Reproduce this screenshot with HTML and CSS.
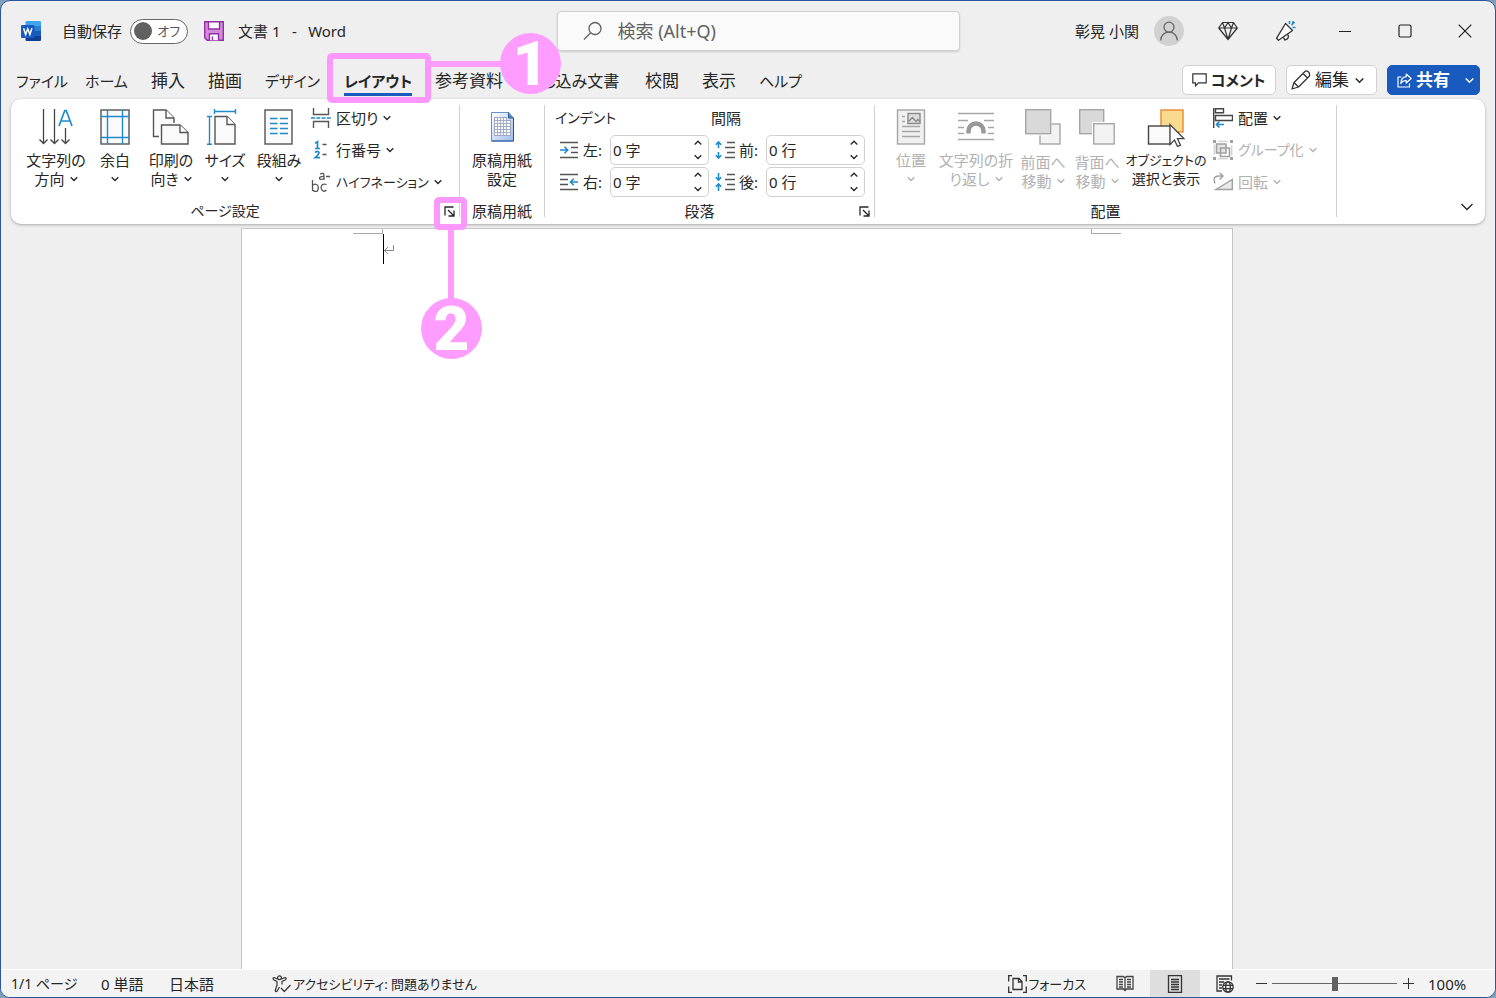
FILE: index.html
```html
<!DOCTYPE html>
<html lang="ja">
<head>
    <meta charset="UTF-8">
    <meta name="viewport" content="width=device-width, initial-scale=1.0">
    <title>文書 1 - Word</title>
    <link rel="stylesheet" href="styles.css">
</head>
<body>

<!-- Shared chevron -->
<svg class="defs" width="0" height="0">
    <symbol id="chev" viewBox="0 0 8 6"><path d="M.7 1.2 4 4.5 7.3 1.2" fill="none" stroke="currentColor" stroke-width="1.3"/></symbol>
    <symbol id="chevUp" viewBox="0 0 8 6"><path d="M.7 4.5 4 1.2 7.3 4.5" fill="none" stroke="currentColor" stroke-width="1.3"/></symbol>
    <symbol id="launch" viewBox="0 0 11 11"><path d="M1 9.500V1h8.500M4 4l5.500 5.500M10 4.500V10H4.500" fill="none" stroke="currentColor" stroke-width="1.300"/></symbol>
</svg>

<div class="window">

    <!-- Title bar -->
    <header class="titlebar">
        <div class="title-left">
            <svg class="word-logo" width="20" height="20" viewBox="0 0 20 20">
                <path d="M4.500 1.200Q4.500 0 5.700 0H18.800Q20 0 20 1.200V5H4.500z" fill="#41a5ee"/>
                <path d="M4.500 5H20v5H4.500z" fill="#2b7cd3"/>
                <path d="M4.500 10H20v5H4.500z" fill="#185abd"/>
                <path d="M4.500 15H20v3.800Q20 20 18.800 20H5.700Q4.500 20 4.500 18.800z" fill="#103f91"/>
                <rect y="4" width="13.500" height="13" rx="1.200" fill="#185abd"/>
                <path d="M2.600 7.300 4.600 13.500 6.750 7.800 8.900 13.500 10.900 7.300" fill="none" stroke="#fff" stroke-width="1.500"/>
            </svg>
            <span class="autosave-label" id="autosave">自動保存</span>
            <button class="toggle" role="switch" aria-checked="false" aria-labelledby="autosave"><span class="knob"></span>オフ</button>
            <button class="icon-btn save" aria-label="上書き保存">
                <svg width="20" height="20" viewBox="0 0 20 20" stroke="#922fa5" stroke-width="1.400">
                    <path d="M.7.7h18.600v18.600H3.200L.7 16.800z" fill="#d58bdc"/>
                    <path d="M4.500.7h11v7.300h-11zM5.500 19.300v-6.500h9v6.500" fill="#fff"/>
                    <path d="M8.500 19v-3.500" fill="none"/>
                </svg>
            </button>
            <span class="doc-title">文書 1&ensp;&nbsp;-&ensp;&nbsp;Word</span>
        </div>
        <label class="search">
            <svg width="20" height="20" viewBox="0 0 20 20" fill="none" stroke="#616161" stroke-width="1.300"><circle cx="12" cy="7.500" r="6"/><path d="M7.700 11.800 1 18.500"/></svg>
            <input type="text" placeholder="検索 (Alt+Q)" aria-label="検索">
        </label>
        <div class="title-right">
            <span class="user">彰晃 小関</span>
            <span class="avatar">
                <svg width="20" height="20" viewBox="0 0 20 20" fill="none" stroke="#666" stroke-width="1.300"><circle cx="10" cy="6.200" r="5"/><path d="M1.700 19.500c0-5 3.500-8.300 8.300-8.300s8.300 3.300 8.300 8.300"/></svg>
            </span>
            <button class="icon-btn cmd" aria-label="プレミアム">
                <svg width="20" height="20" viewBox="0 0 20 20" fill="none" stroke="#333" stroke-width="1.200" stroke-linejoin="round"><path d="M4.500 1.500h11L19.300 7 10 18.500.7 7zM.7 7h18.600M4.500 1.500 6.500 7 10 18.500 13.500 7l2-5.500M6.500 7 10 1.500 13.500 7"/></svg>
            </button>
            <button class="icon-btn cmd" aria-label="近日公開の機能">
                <svg width="22" height="22" viewBox="0 0 22 22" fill="none" stroke="#333" stroke-width="1.300" stroke-linejoin="round"><path d="M10.500 3.500 17.500 10.500 3.500 20.300 1.500 18.300z" fill="#fff"/><path d="M8.500 17.500l1.300 2.500q3.500-.5 3.700-4l-1-1.700"/><path d="M14.500 4V1M16.500 5.300 19.500 2M17.500 7.500h3M17.300 3.500l1-2.500" stroke="#1e8bcd" stroke-width="1.500"/></svg>
            </button>
            <button class="icon-btn sys" aria-label="最小化"><svg width="14" height="14" viewBox="0 0 14 14" stroke="#222"><path d="M1 7.500h12"/></svg></button>
            <button class="icon-btn sys" aria-label="最大化"><svg width="14" height="14" viewBox="0 0 14 14" fill="none" stroke="#222" stroke-width="1.200"><rect x="1" y="1" width="12" height="12" rx="1.500"/></svg></button>
            <button class="icon-btn sys" aria-label="閉じる"><svg width="14" height="14" viewBox="0 0 14 14" stroke="#222" stroke-width="1.200"><path d="M.7.700 13.300 13.300M13.300.700.700 13.300"/></svg></button>
        </div>
    </header>

    <!-- Ribbon tabs -->
    <nav class="tabs">
        <button class="tab kana">ファイル</button>
        <button class="tab kana">ホーム</button>
        <button class="tab">挿入</button>
        <button class="tab">描画</button>
        <button class="tab kana">デザイン</button>
        <button class="tab kana active">レイアウト</button>
        <button class="tab">参考資料</button>
        <button class="tab mixed">差し込み文書</button>
        <button class="tab">校閲</button>
        <button class="tab">表示</button>
        <button class="tab kana">ヘルプ</button>
        <div class="tab-actions">
            <button class="pill comment">
                <svg width="15" height="14" viewBox="0 0 15 14" fill="none" stroke="#333" stroke-width="1.200"><path d="M.8.800h13.400v9H6.500L3.500 12.800V9.800H.8z"/></svg>
                コメント
            </button>
            <button class="pill edit">
                <svg width="20" height="20" viewBox="0 0 20 20" fill="none" stroke="#333" stroke-width="1.300" stroke-linejoin="round"><path d="M1 19 3 12.500 14 1.500q1.500-1.300 3.300.2T18.500 6L7.500 17zM12 3.500 16.500 8M3 12.500 7.500 17"/></svg>
                編集
                <svg class="chev" width="9" height="7"><use href="#chev"/></svg>
            </button>
            <button class="pill share">
                <svg width="15" height="15" viewBox="0 0 15 15" fill="none" stroke="#fff" stroke-width="1.200" stroke-linejoin="round"><path d="M4.500 4H1v10h11.500v-3.500"/><path d="M9.200 1 14.200 5.500 9.200 10V7.500Q5.500 7.300 3.800 10.500 4 4.300 9.200 3.700z"/></svg>
                共有
                <svg class="chev" width="9" height="7"><use href="#chev"/></svg>
            </button>
        </div>
    </nav>

    <!-- Ribbon -->
    <section class="ribbon">
        <div class="group g-page">
            <div class="group-body">
                <button class="big w60">
                    <svg width="36" height="36" viewBox="0 0 36 36" fill="none" stroke="#444" stroke-width="1.300"><path d="M5.500 0v34M1.500 30.500l4 4 4-4M16.500 0v34M12.500 30.500l4 4 4-4M27.500 19v15M23.500 30.500l4 4 4-4"/><path d="M21 17 26.800 1.500h1.400L34 17M23 12h9" stroke="#1e8bcd" stroke-width="1.700"/></svg>
                    <span>文字列の</span><span>方向 <svg class="chev" width="8" height="6"><use href="#chev"/></svg></span>
                </button>
                <button class="big w58">
                    <svg width="36" height="36" viewBox="0 0 36 36" fill="none"><rect x="4" y="1" width="28" height="34" fill="#fafafa" stroke="#555" stroke-width="1.400"/><path d="M10.500 1v34M25.500 1v34M4 7.500h28M4 28.500h28" stroke="#1e8bcd" stroke-width="1.400"/></svg>
                    <span>余白</span><span><svg class="chev" width="8" height="6"><use href="#chev"/></svg></span>
                </button>
                <button class="big w54">
                    <svg width="38" height="36" viewBox="0 0 38 36" fill="#fafafa" stroke="#555" stroke-width="1.400"><path d="M7 27.500H1.500V1H14l8 8v5"/><path d="M14 1v8h8" fill="#fff"/><path d="M9.500 16H28l8 7.500V35H9.500z"/><path d="M28 16v7.500h8" fill="#fff"/></svg>
                    <span>印刷の</span><span>向き <svg class="chev" width="8" height="6"><use href="#chev"/></svg></span>
                </button>
                <button class="big w54">
                    <svg width="36" height="36" viewBox="5 0 36 36" fill="#fafafa" stroke="#555" stroke-width="1.400"><path d="M13 7.500h12l8 8V35H13z"/><path d="M25 7.500v8h8" fill="#fff"/><path d="M12.500 2.500h21M12.500 0v5M33.500 0v5M7.500 7.500v28M5 7.500h5M5 35.300h5" stroke="#1e8bcd" fill="none"/></svg>
                    <span>サイズ</span><span><svg class="chev" width="8" height="6"><use href="#chev"/></svg></span>
                </button>
                <button class="big w54">
                    <svg width="36" height="36" viewBox="0 0 36 36"><rect x="4" y="1" width="27" height="34" fill="#fafafa" stroke="#555" stroke-width="1.400"/><path d="M9 9.500h7.500M9 14.500h7.500M9 19.500h7.500M9 24.500h7.500M19 9.500h8M19 14.500h8M19 19.500h8M19 24.500h8" stroke="#1e8bcd" stroke-width="1.500"/></svg>
                    <span>段組み</span><span><svg class="chev" width="8" height="6"><use href="#chev"/></svg></span>
                </button>
                <div class="smalls">
                    <button class="small">
                        <svg width="20" height="20" viewBox="0 0 20 20" fill="none" stroke="#555" stroke-width="1.400"><path d="M2.500 0v6.500h15V0M2.500 20v-6.500h15V20"/><path d="M0 10h20" stroke="#1e8bcd" stroke-dasharray="4 1.300"/></svg>
                        区切り <svg class="chev" width="8" height="6"><use href="#chev"/></svg>
                    </button>
                    <button class="small">
                        <svg width="20" height="20" viewBox="0 0 20 20" fill="none" stroke="#1e8bcd" stroke-width="1.700"><path d="M4 3.200 6.500 1.800V8.500M4 8.500h5M4 12.500q3-2.200 4 0 0 1.800-3.800 5.200H9"/><path d="M11.500 4.500h4M11.500 14.500h4" stroke="#555" stroke-width="1.400"/></svg>
                        行番号 <svg class="chev" width="8" height="6"><use href="#chev"/></svg>
                    </button>
                    <button class="small kana">
                        <svg width="20" height="20" viewBox="0 0 20 20" fill="none" stroke="#555" stroke-width="1.300"><path d="M9 2q4-1.800 4 1.500V8M13 4.500Q8.500 4.200 8.500 6.300T13 6.500M15 4.500h4M1.500 8v11M1.500 13.500q1.500-2 4-1t1.500 5-5.500.5M15.500 12.500q-4-1.300-5 1.500t1 4.500 4-.500"/></svg>
                        ハイフネーション <svg class="chev" width="8" height="6"><use href="#chev"/></svg>
                    </button>
                </div>
            </div>
            <div class="caption mixed"><span>ページ設定</span><button class="launcher" aria-label="ページ設定の詳細"><svg width="11" height="11"><use href="#launch"/></svg></button></div>
        </div>

        <div class="group g-genko">
            <div class="group-body center">
                <button class="big w78">
                    <svg width="36" height="36" viewBox="0 0 36 36">
                        <defs><linearGradient id="sheet" x1="0" y1="0" x2="1" y2="1"><stop offset="0" stop-color="#fff"/><stop offset="1" stop-color="#9dbdec"/></linearGradient></defs>
                        <path d="M7.500 3.500h17l5 5.500v23h-22z" fill="url(#sheet)" stroke="#6a8fcb"/>
                        <path d="M24.500 3.500V9h5" fill="#5e87cb" stroke="#29529b"/><path d="M29.500 9v23h-22" fill="none" stroke="#29529b"/>
                        <path d="M10.500 8.500h12v3h4v15h-16z" fill="#fff" stroke="#9aa5bd"/>
                        <path d="M10.500 11.500h12M10.500 14.500h16M10.500 17.500h16M10.500 20.500h16M10.500 23.500h16M13.500 8v19M16.500 8v19M19.500 8v19M22.500 8v19" fill="none" stroke="#a3adc4"/>
                    </svg>
                    <span>原稿用紙</span><span>設定</span>
                </button>
            </div>
            <div class="caption"><span>原稿用紙</span></div>
        </div>

        <div class="group g-para">
            <div class="group-body fields">
                <div class="field-col">
                    <h2 class="mixed">インデント</h2>
                    <div class="field">
                        <svg width="20" height="20" viewBox="0 0 20 20" fill="none" stroke="#555" stroke-width="1.400"><path d="M1 2.500h18M12 7.500h7M12 12.500h7M1 17.500h18"/><path d="M1 10h7.500M5.500 6.800 8.700 10l-3.200 3.200" stroke="#1e8bcd" stroke-width="1.600"/></svg>
                        <label for="indL">左:</label>
                        <div class="spin"><input id="indL" type="text" value="0 字"><button aria-label="増やす"><svg width="8" height="6"><use href="#chevUp"/></svg></button><button aria-label="減らす"><svg width="8" height="6"><use href="#chev"/></svg></button></div>
                    </div>
                    <div class="field">
                        <svg width="20" height="20" viewBox="0 0 20 20" fill="none" stroke="#555" stroke-width="1.400"><path d="M1 2.500h18M1 7.500h8M1 12.500h8M1 17.500h18"/><path d="M11.500 10H19M14.700 6.800 11.500 10l3.200 3.200" stroke="#1e8bcd" stroke-width="1.600"/></svg>
                        <label for="indR">右:</label>
                        <div class="spin"><input id="indR" type="text" value="0 字"><button aria-label="増やす"><svg width="8" height="6"><use href="#chevUp"/></svg></button><button aria-label="減らす"><svg width="8" height="6"><use href="#chev"/></svg></button></div>
                    </div>
                </div>
                <div class="field-col">
                    <h2>間隔</h2>
                    <div class="field">
                        <svg width="20" height="20" viewBox="0 0 20 20" fill="none" stroke="#555" stroke-width="1.400"><path d="M12 2.500h8M10 7.500h10M12 12.500h8M10 17.500h10"/><path d="M3.500 8V2M.8 4.700l2.700-2.700 2.700 2.700M3.500 12v6M.8 15.300 3.500 18l2.700-2.700" stroke="#1e8bcd" stroke-width="1.600"/></svg>
                        <label for="spB">前:</label>
                        <div class="spin"><input id="spB" type="text" value="0 行"><button aria-label="増やす"><svg width="8" height="6"><use href="#chevUp"/></svg></button><button aria-label="減らす"><svg width="8" height="6"><use href="#chev"/></svg></button></div>
                    </div>
                    <div class="field">
                        <svg width="20" height="20" viewBox="0 0 20 20" fill="none" stroke="#555" stroke-width="1.400"><path d="M12 2.500h8M10 7.500h10M12 12.500h8M10 17.500h10"/><path d="M3.500 1v7M.8 5.300 3.500 8l2.700-2.700M3.500 19v-7M.8 14.700 3.500 12l2.700 2.700" stroke="#1e8bcd" stroke-width="1.600"/></svg>
                        <label for="spA">後:</label>
                        <div class="spin"><input id="spA" type="text" value="0 行"><button aria-label="増やす"><svg width="8" height="6"><use href="#chevUp"/></svg></button><button aria-label="減らす"><svg width="8" height="6"><use href="#chev"/></svg></button></div>
                    </div>
                </div>
            </div>
            <div class="caption"><span>段落</span><button class="launcher" aria-label="段落の詳細"><svg width="11" height="11"><use href="#launch"/></svg></button></div>
        </div>

        <div class="group g-arrange">
            <div class="group-body">
                <button class="big w50" disabled>
                    <svg width="36" height="36" viewBox="0 0 36 36" fill="none" stroke="#a6a6a6" stroke-width="1.400"><rect x="4.500" y="1" width="27" height="34" fill="#f0f0f0"/><rect x="15" y="4.500" width="12" height="10" stroke="#888" fill="#ddd"/><path d="m15.500 12.500 4-4 3.500 4 2-2 2 2" stroke="#888"/><path d="M9 7.500h3M9 12.500h3M9 17.500h18M9 22.500h18M9 27.500h18"/></svg>
                    <span>位置</span><span><svg class="chev" width="8" height="6"><use href="#chev"/></svg></span>
                </button>
                <button class="big w80" disabled>
                    <svg width="36" height="36" viewBox="0 0 36 36" fill="none" stroke="#a6a6a6" stroke-width="1.400"><path d="M0 4.500h36M0 11.500h10M26 11.500h10M0 18.500h6M30 18.500h6M0 24.500h6M30 24.500h6M0 30.500h36"/><path d="M10.500 24.500v-2.500a7.500 7.500 0 0 1 15 0v2.500" stroke="#999" stroke-width="4.500"/></svg>
                    <span>文字列の折</span><span>り返し <svg class="chev" width="8" height="6"><use href="#chev"/></svg></span>
                </button>
                <button class="big w54 low" disabled>
                    <svg width="36" height="36" viewBox="0 0 36 36" stroke="#a6a6a6" stroke-width="1.400"><rect x="15" y="15" width="20" height="20" fill="#f3f3f3"/><path d="M13 13h13.500v13.500H13z" fill="#fff" stroke="none"/><rect x=".7" y=".7" width="25" height="24" fill="#d9d9d9"/></svg>
                    <span>前面へ</span><span>移動 <svg class="chev" width="8" height="6"><use href="#chev"/></svg></span>
                </button>
                <button class="big w54 low" disabled>
                    <svg width="36" height="36" viewBox="0 0 36 36" stroke="#a6a6a6" stroke-width="1.400"><rect x=".7" y=".7" width="24" height="24" fill="#d9d9d9"/><path d="M13 13h23v23H13z" fill="#fff" stroke="none"/><rect x="14.700" y="14.700" width="20.500" height="20.300" fill="#f3f3f3"/></svg>
                    <span>背面へ</span><span>移動 <svg class="chev" width="8" height="6"><use href="#chev"/></svg></span>
                </button>
                <button class="big w84">
                    <svg width="38" height="38" viewBox="0 0 38 38" class="tall"><rect x="14" y="1" width="22" height="22" fill="#f8db8f" stroke="#e8892b" stroke-width="1.400"/><rect x="1.500" y="17" width="22" height="18" fill="#fafafa" stroke="#444" stroke-width="1.400"/><path d="M23 15.500v20l4.500-4.500 3 6.500 3-1.300-3-6.500H37z" fill="#fff" stroke="#444" stroke-width="1.300"/></svg>
                    <span class="kana">オブジェクトの</span><span class="mixed">選択と表示</span>
                </button>
                <div class="smalls">
                    <button class="small">
                        <svg width="20" height="20" viewBox="0 0 20 20" fill="none" stroke="#444" stroke-width="1.400"><path d="M.7 0v20M2.500.700h8v4h-8zM2.500 7.500h17v5h-17z"/><path d="M3.500 16.500H11M6.500 13.500l-3 3 3 3" stroke="#1e8bcd" stroke-width="1.600"/></svg>
                        配置 <svg class="chev" width="8" height="6"><use href="#chev"/></svg>
                    </button>
                    <button class="small mixed" disabled>
                        <svg width="20" height="20" viewBox="0 0 20 20" fill="#e4e4e4" stroke="#a0a0a0" stroke-width="1.600"><path d="M3.500 4h9.500v9H3.500z"/><path d="M7.500 8h9v8.500h-9z" fill="none"/><path d="M0 0h3v3H0zM17 0h3v3h-3zM0 17h3v3H0zM17 17h3v3h-3z" fill="#a0a0a0" stroke="none"/><path d="M5 1.200h10M5 18.800h10M1.200 5v10M18.800 5v10" stroke="#c4c4c4" stroke-width="1"/></svg>
                        グループ化 <svg class="chev" width="8" height="6"><use href="#chev"/></svg>
                    </button>
                    <button class="small" disabled>
                        <svg width="20" height="20" viewBox="0 0 20 20" fill="none" stroke="#a0a0a0" stroke-width="1.400"><path d="M3 17.500h16.300V7.500z" fill="#eaeaea"/><path d="M2 11.500q-3-7.500 4-7.500h3.500M6.500.700 10 4 6.500 7.500"/></svg>
                        回転 <svg class="chev" width="8" height="6"><use href="#chev"/></svg>
                    </button>
                </div>
            </div>
            <div class="caption"><span>配置</span></div>
        </div>

        <button class="icon-btn collapse" aria-label="リボンの表示オプション"><svg width="12" height="8" viewBox="0 0 12 8" fill="none" stroke="#222" stroke-width="1.300"><path d="m.5 1 5.500 5.500L11.500 1"/></svg></button>
    </section>

    <!-- Document -->
    <main class="workspace">
        <article class="paper">
            <div class="marks"><span class="mark left"></span><span class="mark right"></span></div>
            <div class="line">
                <span class="caret"></span>
                <svg width="11" height="11" viewBox="0 0 11 11" fill="none" stroke="#888"><path d="M9.500 1v5.500H.5M4 3 .5 6.500 4 10"/></svg>
            </div>
        </article>
    </main>

    <!-- Status bar -->
    <footer class="status">
        <span class="st-page mixed">1/1 ページ</span>
        <span class="st-words">0 単語</span>
        <span class="st-lang">日本語</span>
        <span class="st-access kana">
            <svg width="20" height="18" viewBox="0 0 20 18" fill="none" stroke="#333" stroke-width="1.200" stroke-linejoin="round"><circle cx="7.500" cy="2.700" r="1.900"/><path d="M5.500 4 2 2.500Q.3 3.200 1.500 4.700L5 6.500V10l-1.800 5.500q.5 2 2 .5L7.500 12M9.500 4l3.700-1.500q1.700.7.500 2.200L10 6.500V9.500"/><path d="m9 13 3.300 3.500L18.500 10"/></svg>
            アクセシビリティ: 問題ありません
        </span>
        <div class="st-right">
            <button class="focus kana">
                <svg width="19" height="18" viewBox="0 0 19 18" fill="none" stroke="#333" stroke-width="1.300"><path d="M4 .700H.700V6.500M15 .700h3.300V6.500M4 17.300H.700V11.500M15 17.300h3.300V11.500M5 3.500h6l3 3v8H5zM10.500 3.500V7H14"/></svg>
                フォーカス
            </button>
            <button class="view" aria-label="閲覧モード"><svg width="18" height="17" viewBox="0 0 18 17" fill="none" stroke="#444" stroke-width="1.300"><path d="M1 1.500h6.500L9 3l1.500-1.500H17v12.500h-6.500L9 15.500 7.500 14H1zM9 3v13M3 4.500h4M3 7h4M3 9.500h4M3 12h4M11 4.500h4M11 7h4M11 9.500h4M11 12h4"/></svg></button>
            <button class="view on" aria-label="印刷レイアウト"><svg width="16" height="18" viewBox="0 0 16 18" fill="none" stroke="#333" stroke-width="1.300"><path d="M1.500.700h13v16.600h-13zM4 4.500h8M4 7h8M4 9.500h8M4 12h8M4 14.500h8"/></svg></button>
            <button class="view" aria-label="Web レイアウト"><svg width="18" height="18" viewBox="0 0 18 18" fill="none" stroke="#333" stroke-width="1.300"><path d="M6 16H1V1h14.500v4.500M3 4h10.500M3 7h5M3 10h3M3 13h3"/><circle cx="12" cy="12" r="5.200"/><ellipse cx="12" cy="12" rx="2.300" ry="5.200"/><path d="M7 10.300h10M7 13.700h10"/></svg></button>
            <button class="zoom-step" aria-label="縮小"><svg width="11" height="11" stroke="#333"><path d="M0 5.500h11"/></svg></button>
            <input class="zoom" type="range" min="0" max="100" value="50" aria-label="ズーム">
            <button class="zoom-step" aria-label="拡大"><svg width="11" height="11" stroke="#333"><path d="M0 5.500h11M5.500 0v11"/></svg></button>
            <span class="percent">100%</span>
        </div>
    </footer>

    <!-- Step callouts, drawn over everything -->
    <div class="frame frame1"></div>
    <div class="rule rule1"></div>
    <div class="badge badge1">1</div>
    <div class="frame frame2"></div>
    <div class="rule rule2"></div>
    <div class="badge badge2">2</div>
</div>

</body>
</html>
```
FILE: styles.css
```css
* {
    box-sizing: border-box;
}
body {
    margin: 0;
    background: #7f9fbd;
    color: #262626;
    font-family: "Noto Sans", "Noto Sans CJK JP", sans-serif;
    font-size: 15px;
    line-height: 20px;
    font-feature-settings: "palt";
}
button, input {
    font: inherit;
    font-feature-settings: inherit;
    color: inherit;
    margin: 0;
    padding: 0;
    border: none;
    background: none;
}
svg {
    display: block;
    flex: none;
}
.defs {
    position: absolute;
}
.kana {
    font-size: 13px;
}
.mixed {
    font-size: 14px;
}
.window {
    position: relative;
    display: flex;
    flex-direction: column;
    height: 100vh;
    border: 1px solid #2b579a;
    border-radius: 10px;
    background: #efefef;
    overflow: hidden;
    white-space: nowrap;
}

/* title bar */
.titlebar {
    display: grid;
    grid-template-columns: 1fr 403px 1fr;
    align-items: center;
    height: 60px;
    padding-left: 20px;
}
.title-left, .title-right {
    display: flex;
    align-items: center;
}
.title-right {
    justify-content: flex-end;
}
.autosave-label {
    margin: 0 8px 0 21px;
}
.toggle {
    display: flex;
    align-items: center;
    justify-content: space-between;
    width: 58px;
    height: 25px;
    padding: 0 7px 0 3px;
    border: 1px solid #666;
    border-radius: 13px;
    background: #fff;
    color: #555;
    font-size: 13px;
}
.knob {
    width: 18px;
    height: 18px;
    border-radius: 50%;
    background: #616161;
}
.icon-btn {
    display: flex;
    align-items: center;
    justify-content: center;
}
.save {
    margin: 0 14px 0 16px;
}
.search {
    display: flex;
    align-items: center;
    gap: 15px;
    height: 40px;
    padding: 0 25px;
    border: 1px solid #d1d1d1;
    border-radius: 4px;
    background: #fafafa;
    box-shadow: 0 1px 2px rgba(0, 0, 0, .15);
    font-size: 18px;
}
.search input {
    flex: 1;
    min-width: 0;
}
.search input::placeholder {
    color: #616161;
}
.avatar {
    display: flex;
    align-items: center;
    justify-content: center;
    width: 30px;
    height: 30px;
    margin: 0 15px;
    border-radius: 50%;
    background: #d1d1d1;
}
.cmd {
    width: 58px;
    height: 40px;
}
.sys {
    width: 60px;
    height: 40px;
}

/* tabs */
.tabs {
    display: grid;
    grid-template-columns: 69px 66px 57px 57px 79px 91px 91px 119px 57px 57px auto 1fr;
    align-items: center;
    justify-items: start;
    height: 38px;
    padding: 0 15px;
    font-size: 17px;
}
.tab {
    height: 32px;
    border-top: 3px solid transparent;
    border-bottom: 3px solid transparent;
    line-height: 28px;
}
.tab.kana {
    font-size: 15px;
}
.tab.mixed {
    font-size: 16px;
}
.tab.active {
    border-bottom-color: #185abd;
    font-weight: bold;
}
.tab-actions {
    display: flex;
    gap: 10px;
    justify-self: end;
}
.pill {
    display: flex;
    align-items: center;
    gap: 4px;
    height: 30px;
    padding: 0 9px;
    border: 1px solid #d1d1d1;
    border-radius: 5px;
    background: #fff;
}
.comment {
    width: 94px;
    font-size: 15px;
    font-weight: bold;
}
.edit {
    width: 91px;
    padding: 0 4px;
}
.edit .chev {
    margin-left: 2px;
}
.share {
    width: 93px;
    padding: 0 5px 0 9px;
    border-color: #185abd;
    background: #185abd;
    color: #fff;
    font-weight: bold;
}
.share .chev {
    margin-left: auto;
}

/* ribbon */
.ribbon {
    display: flex;
    margin: 0 10px;
    height: 125px;
    border-radius: 10px;
    background: #fff;
    box-shadow: 0 1px 3px rgba(0, 0, 0, .3);
    z-index: 1;
}
.group {
    display: flex;
    flex-direction: column;
    justify-content: space-between;
    margin: 6px 0 7px;
    border-right: 1px solid #d1d1d1;
}
.g-page {
    width: 449px;
}
.g-genko {
    width: 85px;
}
.g-para {
    width: 330px;
}
.g-arrange {
    width: 462px;
}
.group-body {
    display: flex;
    align-items: flex-start;
}
.g-page .group-body {
    padding-left: 15px;
}
.g-arrange .group-body {
    padding-left: 11px;
}
.center {
    justify-content: center;
}
.big {
    display: flex;
    flex-direction: column;
    align-items: center;
    padding-top: 4px;
}
.big > svg {
    margin-bottom: 5px;
}
.big > .tall {
    margin-bottom: 3px;
}
.big.low > svg {
    margin-bottom: 7px;
}
.big > span {
    display: flex;
    align-items: center;
    justify-content: center;
    gap: 5px;
    height: 19px;
}
.big:disabled, .small:disabled {
    color: #b1b1b1;
}
.w50 { width: 50px; }
.w54 { width: 54px; }
.w58 { width: 58px; }
.w60 { width: 60px; }
.w78 { width: 78px; }
.w80 { width: 80px; }
.w84 { width: 84px; }
.smalls {
    display: flex;
    flex-direction: column;
    margin: -3px 0 -3px 5px;
}
.small {
    display: flex;
    align-items: center;
    gap: 5px;
    height: 32px;
}
.caption {
    display: flex;
    align-items: center;
    height: 12px;
}
.caption span {
    flex: 1;
    text-align: center;
}
.launcher {
    display: flex;
    justify-content: center;
    width: 20px;
}
.fields {
    gap: 2px;
    margin-top: -3px;
    padding-left: 10px;
}
.field-col {
    width: 154px;
}
.field-col h2 {
    margin: 0;
    font-size: 15px;
    font-weight: normal;
    line-height: 32px;
}
.field-col .mixed {
    font-size: 14px;
}
.field {
    display: flex;
    align-items: center;
    height: 32px;
    padding-left: 4px;
}
.field label {
    width: 27px;
    margin-left: 4px;
}
.spin {
    display: grid;
    grid-template-columns: 1fr 20px;
    flex: none;
    width: 99px;
    height: 30px;
    border: 1px solid #d1d1d1;
    border-radius: 5px;
    background: #fff;
}
.spin input {
    grid-row: span 2;
    min-width: 0;
    padding-left: 2px;
}
.spin button {
    display: flex;
    align-items: center;
    justify-content: center;
}
.collapse {
    align-self: flex-end;
    width: 20px;
    height: 20px;
    margin: 0 8px 7px auto;
}

/* document */
.workspace {
    flex: 1;
    display: flex;
    justify-content: center;
    padding: 4px 22px 0 0;
}
.paper {
    width: 992px;
    border: 1px solid #c6c6c6;
    border-bottom: none;
    background: #fff;
}
.marks {
    display: flex;
    justify-content: space-between;
    padding: 0 111px;
}
.mark {
    width: 30px;
    height: 5px;
    border-bottom: 1px solid #aaa;
}
.mark.left {
    border-right: 1px solid #aaa;
}
.mark.right {
    border-left: 1px solid #aaa;
}
.line {
    display: flex;
    align-items: center;
    margin: 0 141px;
}
.caret {
    width: 1px;
    height: 30px;
    background: #000;
}

/* status bar */
.status {
    display: flex;
    align-items: center;
    height: 28px;
    padding-left: 10px;
    border-top: 1px solid #fff;
    background: #f3f3f3;
}
.st-page {
    width: 90px;
}
.st-words {
    width: 68px;
}
.st-lang {
    width: 103px;
}
.st-access, .st-right, .focus {
    display: flex;
    align-items: center;
}
.st-access, .focus {
    gap: 1px;
}
.st-right {
    height: 100%;
    margin-left: auto;
    padding-right: 25px;
}
.focus {
    margin-right: 14px;
}
.view {
    display: flex;
    align-items: center;
    justify-content: center;
    width: 50px;
    height: 100%;
}
.view.on {
    background: #dedede;
}
.zoom-step {
    display: flex;
    justify-content: center;
    width: 22px;
}
.zoom {
    appearance: none;
    width: 125px;
    height: 14px;
    background: linear-gradient(#666, #666) center / 100% 1px no-repeat;
}
.zoom::-webkit-slider-thumb {
    appearance: none;
    width: 6px;
    height: 14px;
    background: #616161;
}
.percent {
    width: 42px;
    margin-left: 9px;
}

/* callouts */
.frame, .rule, .badge {
    position: absolute;
    z-index: 2;
}
.frame {
    border: 6px solid #fc97fd;
    border-radius: 5px;
}
.rule {
    background: #ff9cff;
}
.badge {
    width: 61px;
    height: 61px;
    border-radius: 50%;
    background: #ff9cff;
    color: #fff;
    font: 900 62px/61px Roboto, sans-serif;
    text-align: center;
}
.frame1 {
    left: 326px;
    top: 52px;
    width: 104px;
    height: 50px;
}
.rule1 {
    left: 430px;
    top: 60px;
    width: 72px;
    height: 6px;
}
.badge1 {
    left: 499px;
    top: 32px;
}
.frame2 {
    left: 433px;
    top: 196px;
    width: 33px;
    height: 33px;
}
.rule2 {
    left: 447px;
    top: 229px;
    width: 6px;
    height: 72px;
}
.badge2 {
    left: 420px;
    top: 297px;
}
```
